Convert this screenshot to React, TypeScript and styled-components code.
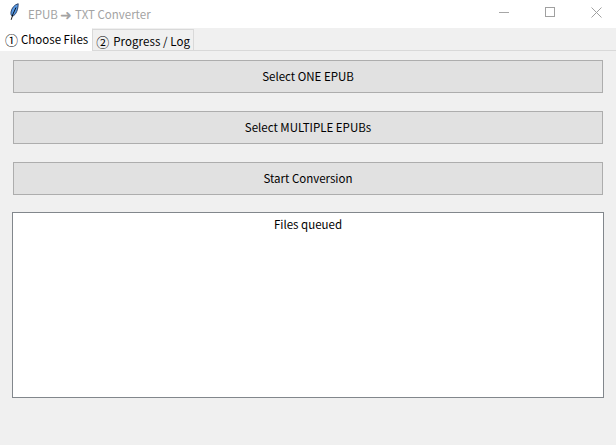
import React from 'react';
import styled, { createGlobalStyle } from 'styled-components';

const GlobalStyle = createGlobalStyle`
  html, body {
    margin: 0;
    padding: 0;
    background: #ffffff;
  }
  body {
    font-family: "Noto Sans CJK KR", "Noto Sans", sans-serif;
    font-size: 11.5px;
    color: #000000;
  }
`;

const Window = styled.div`
  width: 616px;
  height: 445px;
  display: flex;
  flex-direction: column;
  background: #f0f0f0;
`;

const TitleBar = styled.div`
  height: 28px;
  flex: none;
  display: flex;
  align-items: center;
  background: #ffffff;
  padding-left: 8px;
  overflow: hidden;
`;

const AppIcon = styled.svg`
  width: 14px;
  height: 18px;
  margin: 0 6px 4px 0;
`;

const Title = styled.div`
  flex: 1;
  display: flex;
  align-items: center;
  color: #a3a3a3;
  font-size: 11.5px;
  line-height: 16px;
  white-space: pre;
`;

const TitleArrow = styled.span`
  font-size: 14px;
`;

const WindowButtons = styled.div`
  display: flex;
  align-self: flex-start;
  margin-right: -3px;
`;

const WindowButton = styled.div`
  width: 46px;
  height: 24px;
  display: flex;
  align-items: center;
  justify-content: center;
`;

const TabStrip = styled.div`
  height: 23px;
  flex: none;
  display: flex;
  align-items: flex-end;
  box-sizing: border-box;
  border-bottom: 1px solid #d9d9d9;
`;

const Tab = styled.div<{ $active?: boolean }>`
  box-sizing: border-box;
  height: ${p => (p.$active ? '23px' : '21px')};
  padding: ${p => (p.$active ? '0 4px 3px 5px' : '1px 3px 0 3px')};
  margin-bottom: ${p => (p.$active ? '-1px' : '0')};
  display: flex;
  align-items: center;
  white-space: pre;
  line-height: 16px;
  letter-spacing: ${p => (p.$active ? '0' : '0.08px')};
  background: ${p => (p.$active ? '#ffffff' : '#f0f0f0')};
  border-top: 1px solid ${p => (p.$active ? '#ffffff' : '#d9d9d9')};
  border-right: 1px solid #d9d9d9;
`;

const TabNumber = styled.span<{ $gap: number }>`
  font-size: 13px;
  margin-right: ${p => p.$gap}px;
  position: relative;
  top: 1px;
`;

const Content = styled.div`
  flex: 1;
  display: flex;
  flex-direction: column;
  padding: 9px 12px 0;
`;

const ActionButton = styled.div`
  box-sizing: border-box;
  height: 33px;
  margin: 0 1px 18px;
  padding-bottom: 2px;
  display: flex;
  align-items: center;
  justify-content: center;
  background: #e1e1e1;
  border: 1px solid #adadad;
  line-height: 16px;
`;

const QueueBox = styled.div`
  box-sizing: border-box;
  height: 186px;
  margin-top: -1px;
  background: #ffffff;
  border: 1px solid #82878c;
  text-align: center;
  padding-top: 3px;
  line-height: 17px;
`;

export default function App() {
  return (
    <>
      <GlobalStyle />
      <Window>
        <TitleBar>
          <AppIcon viewBox="0 0 14 18">
            <path d="M10.2 0.7 C6.6 1.6 3.6 5 3 9 C2.7 11.4 3.2 13 4.6 13.1 C8 12 10.2 6.4 10.2 0.7 Z" fill="#5a9be6" stroke="#16294d" strokeWidth="0.8" />
            <path d="M8 4.5 L5 11 L3.2 16.8" stroke="#000000" strokeWidth="0.9" fill="none" />
          </AppIcon>
          <Title>EPUB <TitleArrow>➜</TitleArrow> TXT Converter</Title>
          <WindowButtons>
            <WindowButton>
              <svg width="10" height="10" viewBox="0 0 10 10"><path d="M0 5.5H10" stroke="#a6a6a6" strokeWidth="1" /></svg>
            </WindowButton>
            <WindowButton>
              <svg width="10" height="10" viewBox="0 0 10 10"><rect x="0.5" y="0.5" width="9" height="9" fill="none" stroke="#a0a0a0" strokeWidth="1" /></svg>
            </WindowButton>
            <WindowButton>
              <svg width="11" height="11" viewBox="0 0 11 11"><path d="M0.5 0.5L10.5 10.5M10.5 0.5L0.5 10.5" stroke="#a0a0a0" strokeWidth="1" /></svg>
            </WindowButton>
          </WindowButtons>
        </TitleBar>
        <TabStrip>
          <Tab $active><TabNumber $gap={3}>①</TabNumber>Choose Files</Tab>
          <Tab><TabNumber $gap={4}>②</TabNumber>Progress / Log</Tab>
        </TabStrip>
        <Content>
          <ActionButton>Select ONE EPUB</ActionButton>
          <ActionButton>Select MULTIPLE EPUBs</ActionButton>
          <ActionButton>Start Conversion</ActionButton>
          <QueueBox>Files queued</QueueBox>
        </Content>
      </Window>
    </>
  );
}
